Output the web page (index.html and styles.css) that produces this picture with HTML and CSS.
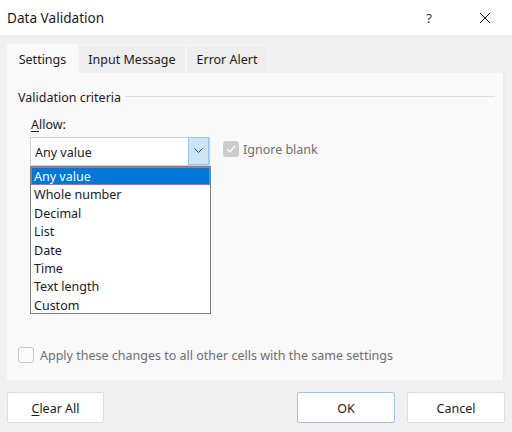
FILE: index.html
```html
<!DOCTYPE html>
<html lang="en">
<head>
<meta charset="utf-8">
<title>Data Validation</title>
<link rel="stylesheet" href="styles.css">
</head>
<body>
<div class="dialog">
  <div class="titlebar">
    <span class="title">Data Validation</span>
    <span class="help">?</span>
    <span class="close">
      <svg width="12" height="12" viewBox="0 0 12 12"><path d="M1 1 L11 11 M11 1 L1 11" stroke="#1a1a1a" stroke-width="1" fill="none"/></svg>
    </span>
  </div>
  <div class="tabs">
    <div class="tab active">Settings</div>
    <div class="tab">Input Message</div>
    <div class="tab">Error Alert</div>
  </div>
  <div class="panel">
    <div class="group-head"><span>Validation criteria</span><span class="rule"></span></div>
    <div class="field-label"><u>A</u>llow:</div>
    <div class="combo-row">
      <div class="combo">
        <span class="combo-value">Any value</span>
        <span class="combo-btn">
          <svg width="9" height="6" viewBox="0 0 9 6"><path d="M0.5 0.5 L4.5 4.5 L8.5 0.5" stroke="#444" stroke-width="1" fill="none"/></svg>
        </span>
        <ul class="list">
          <li class="sel">Any value</li>
          <li>Whole number</li>
          <li>Decimal</li>
          <li>List</li>
          <li>Date</li>
          <li>Time</li>
          <li>Text length</li>
          <li>Custom</li>
        </ul>
      </div>
      <label class="check disabled">
        <span class="box filled">
          <svg width="10" height="8" viewBox="0 0 10 8"><path d="M1 4 L3.8 6.8 L9 1" stroke="#fff" stroke-width="1.2" fill="none"/></svg>
        </span>
        <span class="check-text">Ignore blank</span>
      </label>
    </div>
    <label class="check apply">
      <span class="box"></span>
      <span class="check-text">Apply these changes to all other cells with the same settings</span>
    </label>
  </div>
  <div class="footer">
    <button class="btn"><u>C</u>lear All</button>
    <span class="spacer"></span>
    <button class="btn primary">OK</button>
    <button class="btn">Cancel</button>
  </div>
</div>
</body>
</html>
```

FILE: styles.css
```css
* { box-sizing: border-box; }
html, body { margin: 0; padding: 0; }
body {
  width: 512px;
  height: 432px;
  background: #f0f0f0;
  font-family: "Noto Sans", "Open Sans", sans-serif;
  font-size: 12.5px;
  color: #1a1a1a;
  overflow: hidden;
}
.dialog { display: flex; flex-direction: column; height: 432px; }
.titlebar {
  height: 35px;
  background: #ffffff;
  display: flex;
  align-items: center;
  padding-left: 7px;
}
.title { font-size: 13.6px; flex: 1; }
.help { width: 16px; text-align: center; font-size: 13px; margin-right: 42px; color: #333; }
.close { display: flex; align-items: center; margin-right: 21px; }

.tabs {
  display: flex;
  align-items: flex-end;
  margin-top: 9px;
  padding-left: 7px;
  height: 29px;
}
.tab {
  height: 28px;
  line-height: 28px;
  padding: 0;
  text-align: center;
  white-space: nowrap;
  background: #eeeeee;
  border: 1px solid #f6f6f6;
  border-bottom: none;
  color: #1a1a1a;
}
.tab:nth-child(2) { width: 108px; }
.tab:nth-child(3) { width: 82px; }
.tab.active {
  height: 29px;
  width: 71px;
  background: #f9f9f9;
  border-color: #f9f9f9;
  line-height: 30px;
}

.panel {
  margin: 0 7px;
  height: 307px;
  background: #f9f9f9;
  border-right: 2px solid #ebebeb;
  display: flex;
  flex-direction: column;
  padding: 16px 0 0 11px;
}
.group-head {
  display: flex;
  align-items: center;
  height: 16px;
  margin-right: 8px;
}
.group-head .rule {
  flex: 1;
  height: 1px;
  background: #dedede;
  margin-left: 4px;
  margin-top: -2px;
}
.field-label { margin: 12px 0 0 13px; height: 16px; line-height: 16px; }
.field-label u { text-underline-offset: 2px; }

.combo-row {
  display: flex;
  align-items: flex-start;
  margin: 4px 0 0 12px;
}
.combo {
  position: relative;
  width: 180px;
  height: 29px;
  background: #ffffff;
  border: 1px solid #d0d0d0;
  display: flex;
  align-items: center;
}
.combo-value { flex: 1; padding: 2px 0 0 4px; }
.combo-btn {
  width: 21px;
  height: 28px;
  margin-top: -1px;
  background: #cce4f7;
  border: 1px solid #98c6ec;
  display: flex;
  align-items: center;
  justify-content: center;
}
.list {
  position: absolute;
  left: -1px;
  top: 28px;
  width: 181px;
  height: 148px;
  margin: 0;
  padding: 0;
  list-style: none;
  background: #ffffff;
  border: 1px solid #808080;
  z-index: 2;
}
.list li {
  height: 18.4px;
  line-height: 19px;
  padding-left: 3px;
  white-space: nowrap;
}
.list li.sel {
  background: #0078d7;
  color: #ffffff;
  outline: 1px solid #a67497;
  outline-offset: -1px;
}

.check { display: flex; align-items: center; }
.box {
  width: 16px;
  height: 16px;
  border: 1px solid #c6c6c6;
  border-radius: 3px;
  background: #fbfbfb;
  display: flex;
  align-items: center;
  justify-content: center;
}
.box.filled { background: #cccccc; border-color: #cccccc; }
.check-text { margin-left: 4px; color: #6e6e6e; padding-top: 1px; }
.disabled { margin: 3px 0 0 13px; }
.apply { margin-top: auto; margin-bottom: 16px; }
.apply .box { margin-right: 2px; }

.footer {
  display: flex;
  margin-top: 12px;
  padding: 0 7px;
}
.spacer { flex: 1; }
.btn {
  width: 98px;
  height: 31px;
  background: #ffffff;
  border: 1px solid #dcdcdc;
  border-radius: 2px;
  font-family: inherit;
  font-size: 12.5px;
  color: #1a1a1a;
  padding: 1px 0 0;
}
.btn:first-child { width: 97px; }
.btn.primary { border-color: #9fc2e8; margin-right: 12px; }
.btn u { text-underline-offset: 2px; }
```
